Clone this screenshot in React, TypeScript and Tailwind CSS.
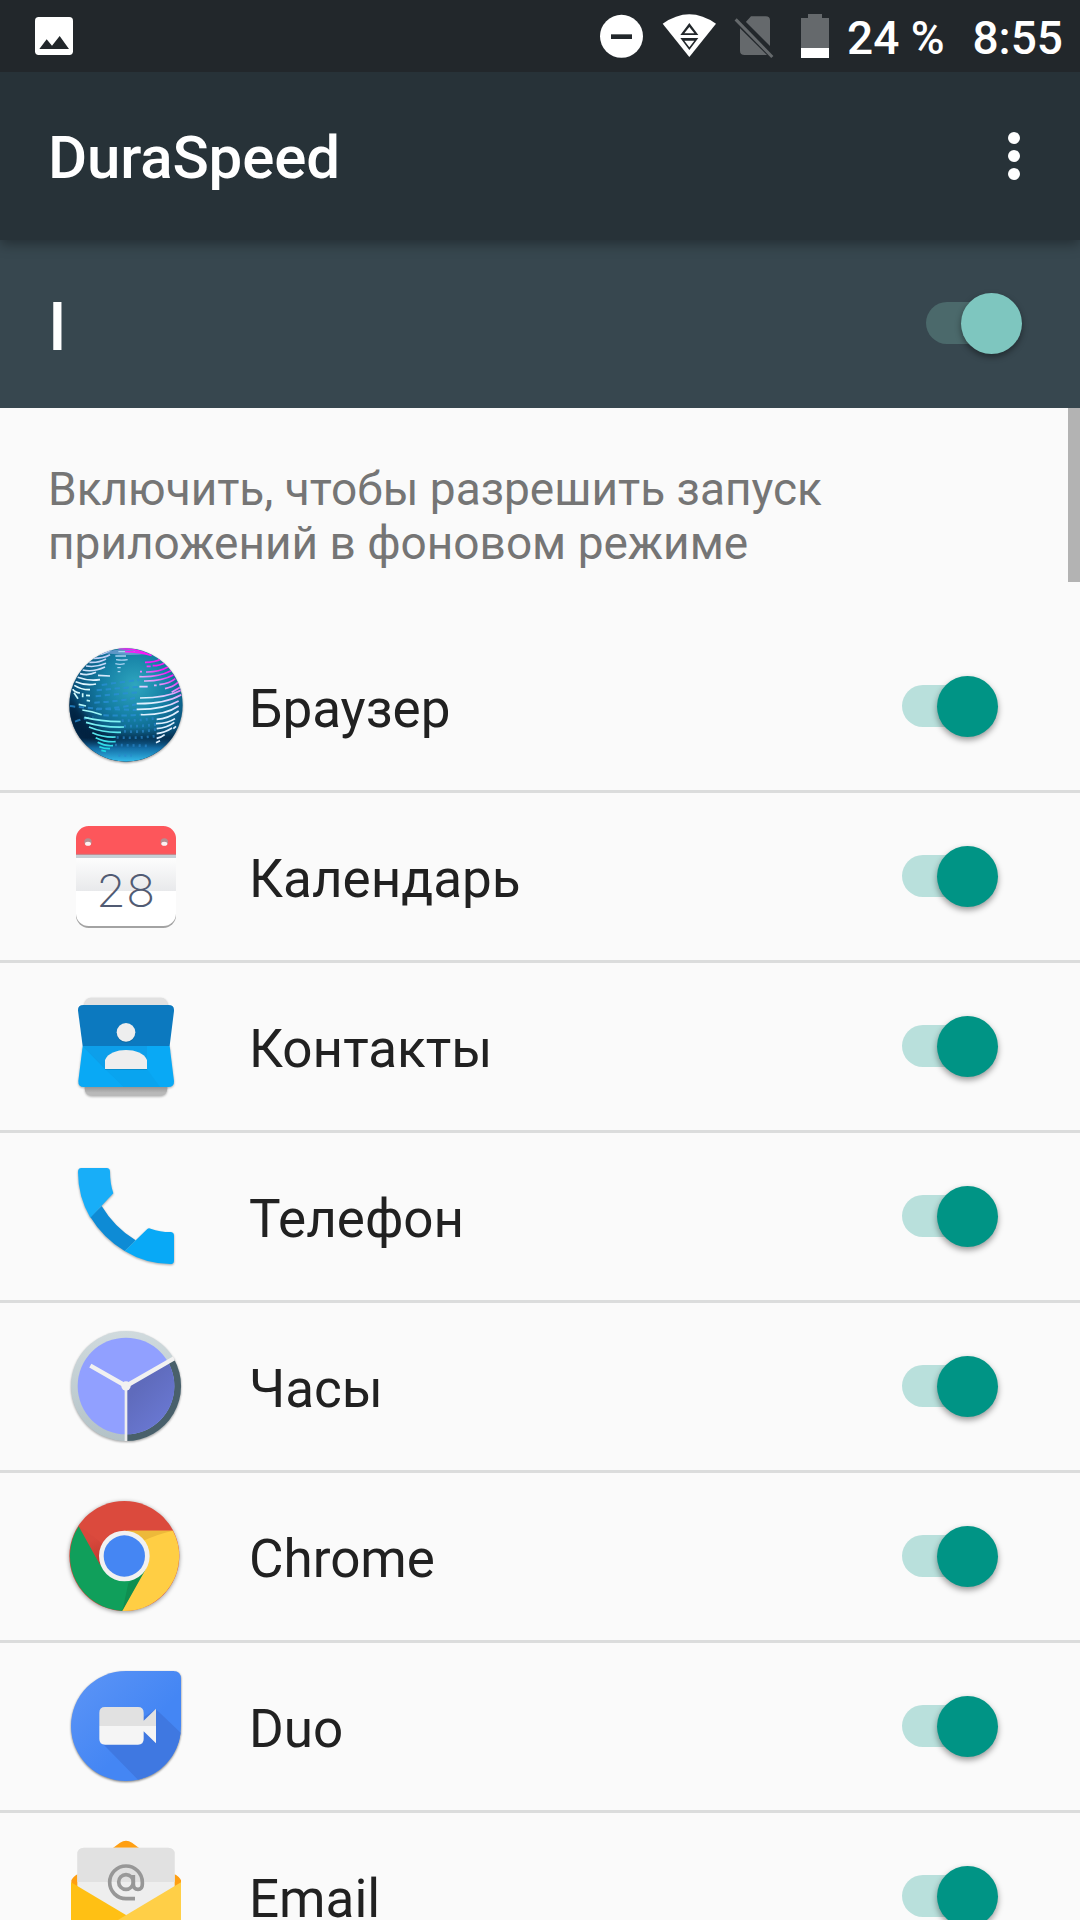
import React, { useState } from "react";

interface AppEntry {
  name: string;
  icon: React.ReactNode;
}

interface SwitchProps {
  checked: boolean;
  onChange: () => void;
  label: string;
  dark?: boolean;
}

const iconClass = "w-[120px] h-[120px] -mt-[3px] overflow-visible shrink-0";

const BrowserIcon = () => (
  <svg viewBox="48 45 360 360" className={`${iconClass} drop-shadow-[0_1px_1px_rgba(0,0,0,0.4)]`}>
    <defs>
      <radialGradient id="globe" gradientUnits="userSpaceOnUse" cx="255" cy="165" r="215">
        <stop offset="0" stopColor="#2fa6bf" />
        <stop offset="0.45" stopColor="#1580a5" />
        <stop offset="0.8" stopColor="#0a5680" />
        <stop offset="1" stopColor="#053a60" />
      </radialGradient>
      <linearGradient id="globeBottom" x1="0" y1="0" x2="0" y2="1">
        <stop offset="0.7" stopColor="#021c38" stopOpacity="0" />
        <stop offset="0.79" stopColor="#021c38" stopOpacity="0.55" />
        <stop offset="0.88" stopColor="#1572ad" stopOpacity="0.9" />
        <stop offset="1" stopColor="#35bdec" />
      </linearGradient>
      <linearGradient id="stripeLeft" gradientUnits="userSpaceOnUse" x1="0" y1="70" x2="0" y2="365">
        <stop offset="0" stopColor="#b9c8f5" />
        <stop offset="0.35" stopColor="#e3fbff" />
        <stop offset="0.65" stopColor="#8ff5f5" />
        <stop offset="1" stopColor="#19d5e3" />
      </linearGradient>
      <linearGradient id="stripeRight" gradientUnits="userSpaceOnUse" x1="345" y1="125" x2="300" y2="205">
        <stop offset="0" stopColor="#f41cf5" />
        <stop offset="0.5" stopColor="#e0a9fb" />
        <stop offset="1" stopColor="#dff0ff" />
      </linearGradient>
      <clipPath id="globeClip">
        <circle cx="228" cy="225" r="170" />
      </clipPath>
    </defs>
    <circle cx="228" cy="225" r="170" fill="url(#globe)" />
    <g clipPath="url(#globeClip)" fill="none">
      <path d="M50 190Q80 225 130 280T215 330L150 350L50 300Z" fill="#011a36" opacity="0.75" className="blur-[12px]" />
      <circle cx="228" cy="225" r="170" fill="url(#globeBottom)" />
      <g stroke="#2a8fd6" strokeWidth="6" strokeDasharray="16 11" opacity="0.75">
        <path d="M155 165Q220 155 268 150" />
        <path d="M140 181Q220 172 300 170" />
        <path d="M137 199Q220 190 265 187" />
        <path d="M133 218Q210 214 255 204" />
        <path d="M138 238Q210 234 258 223" />
        <path d="M60 228Q110 236 260 240" />
        <path d="M160 256Q220 258 270 254" />
        <path d="M75 275Q110 262 130 262" />
      </g>
      <g stroke="#2a86cb" strokeWidth="8" strokeDasharray="6 12" opacity="0.7">
        <path d="M215 272Q270 272 318 264" />
        <path d="M222 288Q270 290 318 283" />
        <path d="M222 304Q270 308 318 298" />
        <path d="M200 322Q260 326 315 318" />
        <path d="M195 345Q245 346 300 348" />
        <path d="M205 376H245" />
      </g>
      <path d="M155 70Q230 45 290 72Q240 78 190 72Z" fill="#86a9dd" opacity="0.65" />
      <g stroke="url(#stripeLeft)" strokeWidth="5">
        <path d="M145 74Q165 72 185 58" />
        <path d="M130 85Q160 85 180 74" />
        <path d="M118 97Q145 99 168 87" />
        <path d="M108 108Q138 113 168 100" />
        <path d="M98 120Q130 127 165 111" />
        <path d="M90 131Q115 138 138 127" />
        <path d="M144 136L180 138" />
        <path d="M83 142Q115 154 150 149" />
        <path d="M77 155Q108 168 138 162" />
        <path d="M73 166Q95 180 120 179" />
        <path d="M68 178Q75 188 90 189" />
        <path d="M72 188L84 206" />
        <path d="M98 190L98 202" />
        <path d="M108 196L120 197M110 211L120 213M86 223L108 228" />
        <path d="M97 240Q125 243 155 254" />
        <path d="M103 262Q150 274 212 275" />
        <path d="M108 277Q160 293 222 291" />
        <path d="M117 291Q160 309 213 307" />
        <path d="M127 308Q160 323 197 321" />
        <path d="M137 323Q165 337 197 335" />
        <path d="M143 337Q165 349 189 347" />
        <path d="M148 350Q165 357 180 356" />
        <path d="M154 361L168 364" />
      </g>
      <g stroke="#a9d3f2" strokeWidth="4">
        <path d="M205 65H255M196 78H228M198 89Q215 92 233 89M196 101Q210 105 224 101M202 113H212M203 125H211" />
      </g>
      <g stroke="url(#stripeRight)" strokeWidth="5">
        <path d="M205 55Q260 56 292 72" />
        <path d="M225 65Q270 66 305 76" />
        <path d="M285 97Q315 97 335 86" />
        <path d="M290 109L302 109M308 107Q330 107 345 98" />
        <path d="M270 125L276 125M288 126Q325 127 354 111" />
        <path d="M268 140Q325 142 363 122" />
        <path d="M282 153Q335 154 370 135" />
        <path d="M268 170L293 170M312 166L320 166M328 164Q360 160 376 146" />
        <path d="M345 176Q370 170 384 157" />
        <path d="M365 187L392 171" />
        <path d="M270 204Q350 204 395 180" />
        <path d="M260 221Q345 222 394 194" />
        <path d="M260 238Q340 239 386 213" />
        <path d="M272 254Q345 256 386 228" />
        <path d="M320 268Q355 266 386 243" />
        <path d="M318 281Q355 280 375 266" />
        <path d="M320 296Q350 294 373 277" />
        <path d="M320 311Q345 308 366 294" />
        <path d="M320 325Q335 322 344 314" />
        <path d="M318 338L330 332M370 296L378 289" />
      </g>
    </g>
  </svg>
);

const CalendarIcon = () => (
  <svg viewBox="48 15 360 360" className={iconClass}>
    <defs>
      <linearGradient id="calTop" x1="0" y1="0" x2="0" y2="1">
        <stop offset="0" stopColor="#fdfdfd" />
        <stop offset="1" stopColor="#e8e9eb" />
      </linearGradient>
    </defs>
    <rect x="78" y="54" width="300" height="300" rx="38" fill="#a3a3a3" />
    <path d="M78 132H378V311A38 38 0 0 1 340 348H116A38 38 0 0 1 78 311Z" fill="#fff" />
    <rect x="78" y="144" width="300" height="99" fill="url(#calTop)" />
    <rect x="78" y="132" width="300" height="12" fill="#c7cfd5" />
    <path d="M78 132V86A38 38 0 0 1 116 48H340A38 38 0 0 1 378 86V132Z" fill="#fd565b" />
    <path d="M78 133H378" stroke="#c8777e" strokeWidth="3" />
    <circle cx="114" cy="96" r="11" fill="#b58f92" />
    <circle cx="343" cy="96" r="11" fill="#b58f92" />
    <ellipse cx="114" cy="101" rx="9" ry="6" fill="#fff0f1" />
    <ellipse cx="343" cy="101" rx="9" ry="6" fill="#fff0f1" />
    <text
      x="227"
      y="291"
      textAnchor="middle"
      textLength="178"
      lengthAdjust="spacingAndGlyphs"
      fill="#515b73"
      className="text-[136px] font-extralight font-[Inter,sans-serif]"
    >
      28
    </text>
  </svg>
);

const ContactsIcon = () => (
  <svg viewBox="48 15 360 360" className={iconClass}>
    <defs>
      <linearGradient id="contactsBottom" x1="0" y1="0" x2="0" y2="1">
        <stop offset="0.1" stopColor="#969696" />
        <stop offset="0.7" stopColor="#b9b9b9" />
      </linearGradient>
    </defs>
    <g className="drop-shadow-[0_3px_3px_rgba(0,0,0,0.3)]">
      <path d="M122 53H334Q350 53 354 76H102Q106 53 122 53Z" fill="#e1e1e1" />
      <path d="M104 318H352V326Q350 347 330 347H126Q106 347 104 326Z" fill="url(#contactsBottom)" />
      <path d="M98 198L85 303Q84 321 101 321H355Q373 321 372 303L359 198Z" fill="#09a9f5" />
    </g>
    <path d="M98 198L84 92Q83 75 100 75H356Q373 75 372 92L359 198Z" fill="#0c79bf" />
    <path d="M98 198L165 267L222 321L165 267V198Z" fill="#0d9de6" />
    <path d="M98 198H291V267H232L222 321Z" fill="#0d9fea" />
    <path d="M222 321L165 267H291L330 321Z" fill="#09a4ef" />
    <circle cx="228" cy="157" r="28" fill="#eee" className="drop-shadow-[0_2px_2px_rgba(0,0,0,0.2)]" />
    <path d="M165 267V240C180 200 276 200 291 240V267Z" fill="#eee" className="drop-shadow-[0_2px_2px_rgba(0,0,0,0.2)]" />
  </svg>
);

const PhoneIcon = () => (
  <svg viewBox="48 15 360 360" className={`${iconClass} drop-shadow-[0_1px_1px_rgba(0,0,0,0.35)]`}>
    <path d="M121 201L155 168Q193 232 257 271L224 303Q160 265 121 201Z" fill="#0e8bd5" />
    <path d="M94 54H170Q180 54 180 65Q180 100 190 130L121 203Q84 140 84 66Q84 54 94 54Z" fill="#18aef8" />
    <path d="M224 303L292 237Q296 233 302 236Q330 246 361 246Q372 246 372 257V332Q372 342 361 342Q286 341 224 303Z" fill="#08a9f6" />
  </svg>
);

const ClockIcon = () => (
  <svg viewBox="48 30 360 360" className={`${iconClass} drop-shadow-[0_1px_1px_rgba(0,0,0,0.35)]`}>
    <defs>
      <linearGradient id="clockShade" gradientUnits="userSpaceOnUse" x1="250" y1="230" x2="330" y2="310">
        <stop offset="0" stopColor="#5f6bbc" />
        <stop offset="1" stopColor="#6876cf" />
      </linearGradient>
      <linearGradient id="clockRim" gradientUnits="userSpaceOnUse" x1="200" y1="50" x2="200" y2="378">
        <stop offset="0" stopColor="#d0dadd" />
        <stop offset="1" stopColor="#b3c2c7" />
      </linearGradient>
    </defs>
    <circle cx="228" cy="213" r="165" fill="url(#clockRim)" />
    <path d="M228 213L372 132A165 165 0 0 1 228 378Z" fill="#49606b" />
    <circle cx="228" cy="213" r="145" fill="#91a0ff" />
    <path d="M228 213L354 141A145 145 0 0 1 228 358Z" fill="url(#clockShade)" />
    <path d="M228 213V378" stroke="#eee" strokeWidth="8" />
    <path d="M228 213L121 152M228 213L372 130" stroke="#f1f1f1" strokeWidth="13" />
    <circle cx="228" cy="213" r="14" fill="#f1f1f1" />
  </svg>
);

const ChromeIcon = () => (
  <svg viewBox="48 30 360 360" className={`${iconClass} drop-shadow-[0_1px_2px_rgba(0,0,0,0.4)]`}>
    <defs>
      <linearGradient id="chromeRed" gradientUnits="userSpaceOnUse" x1="125" y1="165" x2="150" y2="240">
        <stop offset="0" stopColor="#d8483c" />
        <stop offset="1" stopColor="#bf382e" />
      </linearGradient>
    </defs>
    <circle cx="223" cy="213" r="165" fill="#db4a3d" />
    <path d="M86 124L150 239L160 180Q135 155 86 124Z" fill="url(#chromeRed)" />
    <path d="M86 124A165 165 0 0 0 217 378L290 250L223 213L150 239Z" fill="#109f5b" />
    <path d="M217 378L235 295L284 262Z" fill="#0f8f50" />
    <path d="M223 137H369A165 165 0 0 1 217 378L288 251Z" fill="#ffce44" />
    <path d="M230 137H369Q320 148 284 166Z" fill="#edb93a" />
    <circle cx="223" cy="213" r="76" fill="#f1f1f1" />
    <circle cx="223" cy="213" r="62" fill="#4586f3" />
  </svg>
);

const DuoIcon = () => (
  <svg viewBox="48 30 360 360" className={`${iconClass} drop-shadow-[0_1px_1px_rgba(0,0,0,0.5)]`}>
    <defs>
      <linearGradient id="duo" x1="0" y1="0" x2="0.6" y2="0.6">
        <stop offset="0" stopColor="#5d95f6" />
        <stop offset="1" stopColor="#4486f4" />
      </linearGradient>
    </defs>
    <path d="M228 48H370Q393 48 393 72V213A165 165 0 1 1 228 48Z" fill="url(#duo)" />
    <path d="M318 163L392 233A165 165 0 0 1 264 374L157 265Z" fill="#3f78e1" />
    <path d="M148 213V173Q148 156 165 156H264Q281 156 281 173V197L318 161V213Z" fill="#e1e1e1" />
    <path d="M148 213V252Q148 269 165 269H264Q281 269 281 252V229L318 265V213Z" fill="#f5f5f5" />
  </svg>
);

const EmailIcon = () => (
  <svg viewBox="48 540 360 360" className={iconClass}>
    <path d="M64 676Q68 665 85 656L210 563Q228 551 246 563L371 656Q390 665 393 676V860H64Z" fill="#ff9f12" />
    <path d="M82 598Q82 578 102 578H354Q374 578 374 598V860H82Z" fill="#eee" />
    <path d="M82 681V598Q82 578 102 578H354Q374 578 374 598V681Z" fill="#e1e1e1" />
    <g fill="none" strokeWidth="11">
      <circle cx="228" cy="681" r="22" stroke="#999" />
      <path d="M255 731H228A49 49 0 1 1 277 682V687Q277 703 264 703Q250 703 250 687V660" stroke="#979797" />
    </g>
    <path d="M63 682L228 780V880H63Z" fill="#ffc014" />
    <path d="M393 682L205 794V880H393Z" fill="#ffcf47" />
  </svg>
);

const apps: AppEntry[] = [
  { name: "Браузер", icon: <BrowserIcon /> },
  { name: "Календарь", icon: <CalendarIcon /> },
  { name: "Контакты", icon: <ContactsIcon /> },
  { name: "Телефон", icon: <PhoneIcon /> },
  { name: "Часы", icon: <ClockIcon /> },
  { name: "Chrome", icon: <ChromeIcon /> },
  { name: "Duo", icon: <DuoIcon /> },
  { name: "Email", icon: <EmailIcon /> },
];

const Switch: React.FC<SwitchProps> = ({ checked, onChange, label, dark }) => (
  <button
    type="button"
    role="switch"
    aria-checked={checked}
    aria-label={label}
    onClick={onChange}
    className="flex items-center w-[96px] h-[42px] mb-px shrink-0"
  >
    <span className={`w-[84px] h-[42px] rounded-full shrink-0 -mr-[49px] ${dark ? "bg-[#4b696b]" : "bg-[#b9e0dc]"}`} />
    <span
      className={`w-[61px] h-[61px] rounded-full shrink-0 shadow-[0_3px_6px_rgba(0,0,0,0.4)] ${
        dark ? "bg-[#7ec6bf]" : "bg-[#009485]"
      } ${checked ? "" : "-translate-x-[35px]"}`}
    />
  </button>
);

const StatusBar = () => (
  <div className="relative z-20 flex items-center h-[72px] shrink-0 pl-[35px] bg-[#22272b] text-white text-[46px] font-medium whitespace-nowrap">
    {/* Screenshot notification */}
    <svg viewBox="105 0 114 216" className="w-[38px] h-[72px]">
      <rect x="105" y="51" width="114" height="114" rx="11" fill="#fff" />
      <path d="M118 147L140 118L156 137L179 108L207 147Z" fill="#22272b" />
    </svg>

    {/* Do not disturb */}
    <svg viewBox="60 0 129 216" className="w-[43px] h-[72px] ml-[527px]">
      <circle cx="124.5" cy="109" r="64.5" fill="#fff" />
      <rect x="93" y="103" width="63" height="14" fill="#22272b" />
    </svg>

    {/* Wi-Fi */}
    <svg viewBox="246 0 165 216" className="w-[55px] h-[72px] ml-[19px]">
      <path d="M248 71Q328 14 408 71L328 171Z" fill="#fff" />
      <path d="M328 69L355 105H301ZM301 114H355L328 150Z" fill="#22272b" />
      <path d="M328 81L343 100H313ZM313 122H343L328 142Z" fill="#fff" />
    </svg>

    {/* No SIM */}
    <svg viewBox="462 0 120 216" className="w-[40px] h-[72px] ml-[17px]">
      <path d="M498 65L513 49H557Q570 49 570 61V138L498 66ZM480 85L561 165H494Q480 165 480 152Z" fill="#65696c" />
      <path d="M467 58L577 171" stroke="#65696c" strokeWidth="9" />
    </svg>

    {/* Battery */}
    <svg viewBox="663 0 84 216" className="w-[28px] h-[72px] ml-[27px]">
      <path d="M684 42H726V54H747V144H663V54H684Z" fill="#65696c" />
      <rect x="663" y="144" width="84" height="30" fill="#fff" />
    </svg>

    <span className="ml-[18px] pt-[4px]">24 %</span>
    <span className="ml-auto mr-[17px] pt-[4px]">8:55</span>
  </div>
);

const App: React.FC = () => {
  const [enabled, setEnabled] = useState(true);
  const [allowed, setAllowed] = useState<boolean[]>(apps.map(() => true));

  const toggleApp = (index: number) => {
    setAllowed((prev) => prev.map((value, i) => (i === index ? !value : value)));
  };

  return (
    <div className="flex flex-col w-[1080px] h-[1920px] overflow-hidden bg-[#fafafa] font-[Roboto,sans-serif]">
      <StatusBar />

      {/* App bar */}
      <header className="relative z-10 flex items-center justify-between h-[168px] shrink-0 pl-[48px] pr-[60px] bg-[#273238] text-white shadow-[0_4px_12px_rgba(0,0,0,0.35)]">
        <h1 className="text-[60px] leading-[70px] font-medium tracking-[-0.15px] pt-[4px]">DuraSpeed</h1>
        <button type="button" aria-label="Menu" className="flex flex-col gap-[6px]">
          <span className="w-3 h-3 rounded-full bg-white" />
          <span className="w-3 h-3 rounded-full bg-white" />
          <span className="w-3 h-3 rounded-full bg-white" />
        </button>
      </header>

      {/* Main switch */}
      <div className="flex items-center justify-between h-[168px] shrink-0 pl-[48px] pr-[58px] pb-px bg-[#37474f] text-white">
        <span className="text-[66px] leading-[77px] font-medium pt-[7px]">I</span>
        <Switch checked={enabled} onChange={() => setEnabled(!enabled)} label="DuraSpeed" dark />
      </div>

      <main className="relative flex-1 min-h-0 overflow-hidden">
        <p className="h-[215px] pt-[54px] pl-[48px] text-[46px] leading-[54px] text-[#757575]">
          Включить, чтобы разрешить запуск
          <br />
          приложений в фоновом режиме
        </p>

        <ul>
          {apps.map((app, index) => (
            <li
              key={app.name}
              className="flex items-center h-[170px] pl-[66px] pr-[82px] border-b-[3px] border-[#dbdcdc]"
            >
              {app.icon}
              <span className="flex-1 pl-[63px] pt-[4px] text-[53px] leading-[64px] text-[#212121]">{app.name}</span>
              <Switch checked={allowed[index]} onChange={() => toggleApp(index)} label={app.name} />
            </li>
          ))}
        </ul>

        {/* Scrollbar thumb */}
        <div className="absolute top-0 right-0 w-[12px] h-[174px] bg-[#b3b3b3]" />
      </main>
    </div>
  );
};

export default App;
